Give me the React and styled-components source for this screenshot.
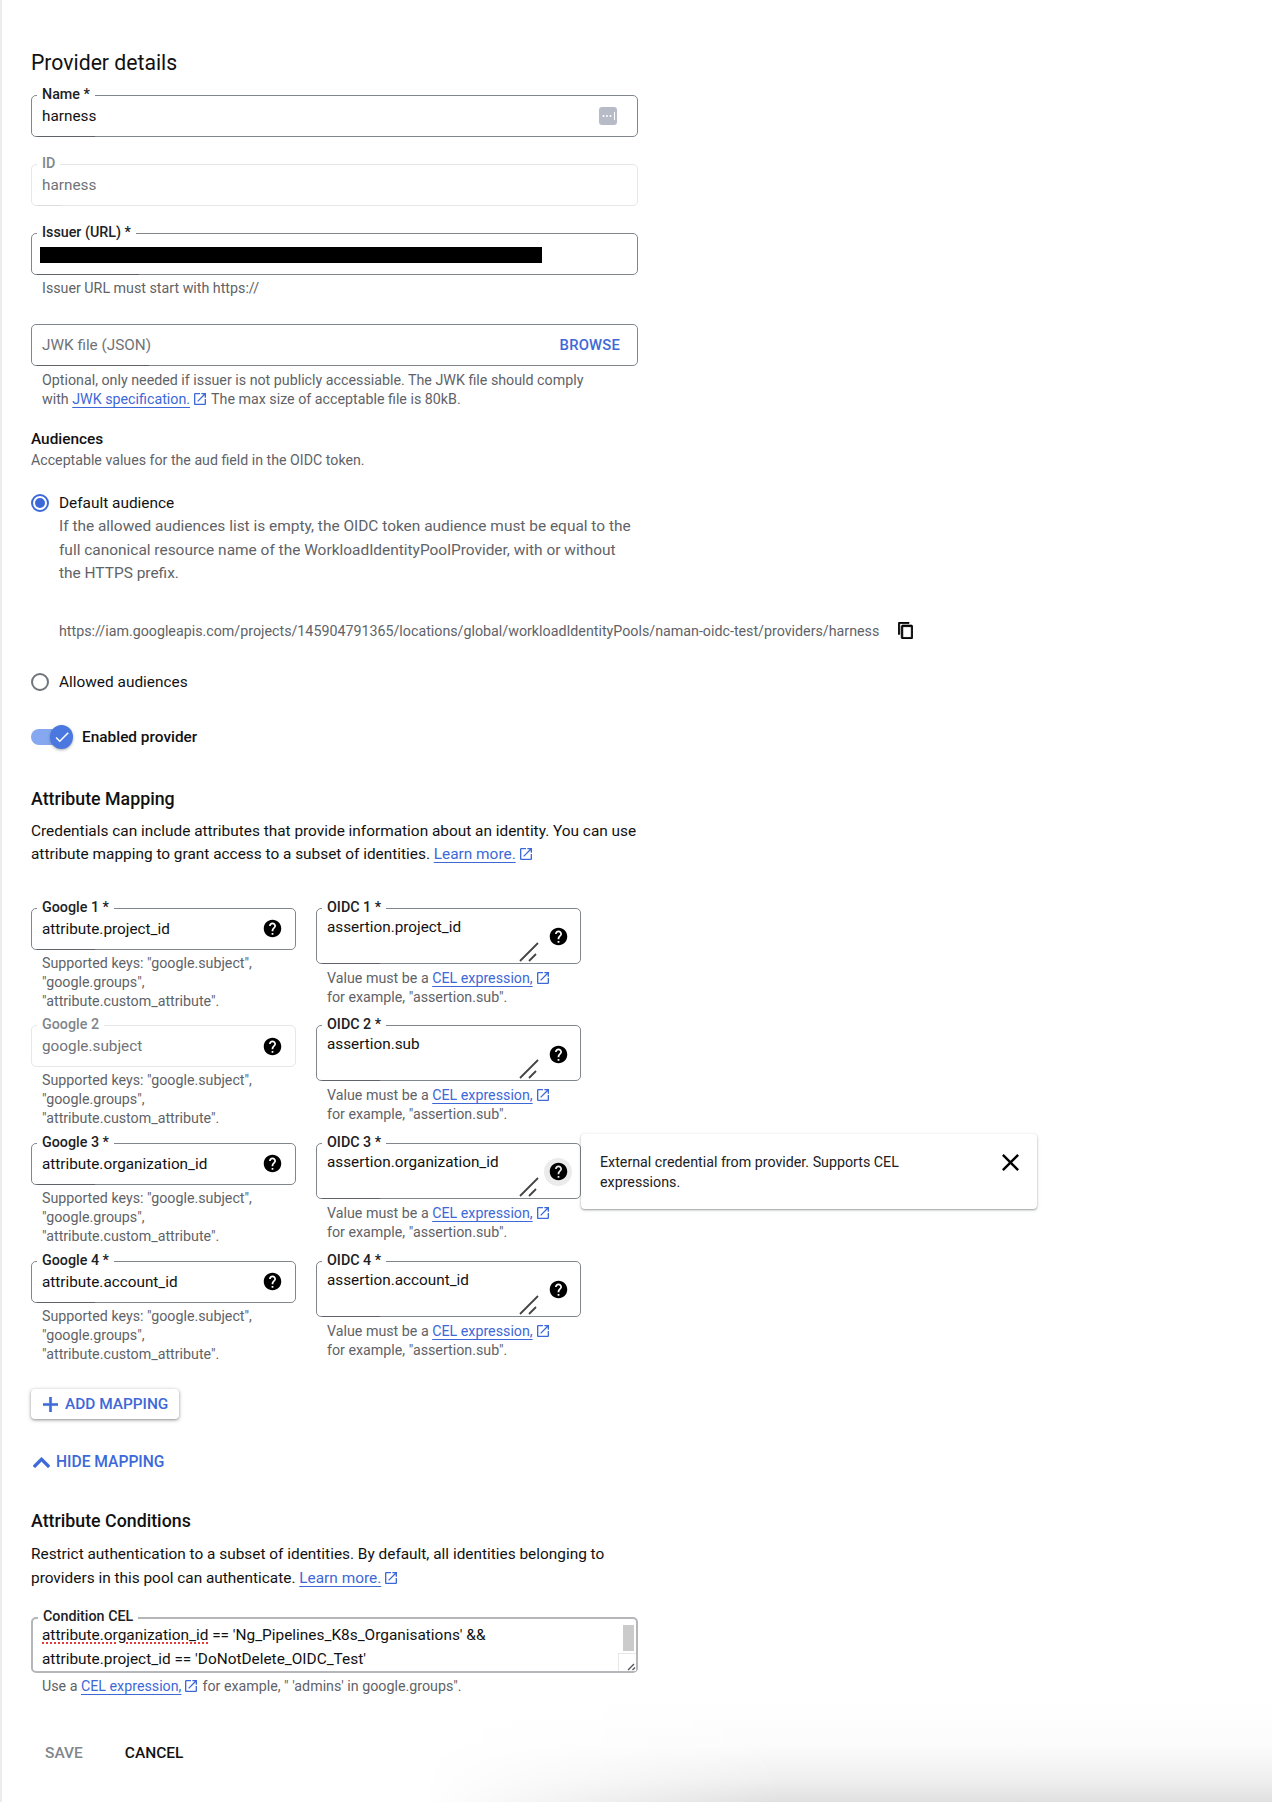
import React from "react";
import styled, { createGlobalStyle } from "styled-components";

const BLUE = "#3d68d8";
const HINT = "#5f6368";
const INK = "#202124";

const GlobalStyle = createGlobalStyle`
  html, body {
    margin: 0;
    padding: 0;
    background: #fff;
  }
  body {
    font-family: Roboto, "Liberation Sans", sans-serif;
    font-size: 14px;
    color: ${INK};
  }
`;

const Page = styled.div`
  position: relative;
  box-sizing: border-box;
  width: 100%;
  height: 1802px;
  overflow: hidden;
  padding: 51px 0 0 29px;
  border-left: 2px solid #ececec;
`;
const BottomShade = styled.div`
  position: absolute;
  left: 0;
  right: 0;
  bottom: 0;
  height: 100px;
  pointer-events: none;
  background: linear-gradient(to top, #e0e0e0 0, #efefef 22px, #fbfbfb 55px, #fff 100px);
  mask-image: linear-gradient(to right, transparent 420px, #000 780px);
`;
const Heading = styled.h2`
  margin: 0;
  font-size: 21.2px;
  line-height: 24px;
  font-weight: 400;
  color: #111;
`;
const SubHeading = styled.h3`
  margin: ${props => props.$top}px 0 0;
  font-size: 17.8px;
  line-height: 24px;
  font-weight: 500;
  color: #111;
`;
const Field = styled.div`
  position: relative;
  box-sizing: border-box;
  display: flex;
  align-items: ${props => (props.$area ? "flex-start" : "center")};
  justify-content: space-between;
  width: ${props => props.$width || 607}px;
  height: ${props => props.$height || 42}px;
  margin-top: ${props => props.$top || 0}px;
  padding: ${props => (props.$area ? "6px 10px 0" : "0 10px")};
  border: 1px solid ${props => (props.$off ? "#e6e7e9" : "#80868b")};
  border-radius: 5px;
  font-size: 15.3px;
  line-height: 24px;
  color: ${props => (props.$off || props.$muted ? "#6f7378" : "#111")};
  &::after {
    content: "";
    position: absolute;
    left: 5px;
    bottom: -1px;
    width: ${props => props.$notch || 0}px;
    height: 1px;
    background: ${props => (props.$off ? "#dcdde0" : "#5f6368")};
  }
`;
const FieldLabel = styled.label`
  position: absolute;
  top: ${props => props.$offset ?? -10}px;
  left: 5px;
  padding: 0 5px;
  background: #fff;
  font-size: 14.3px;
  line-height: 16px;
  font-weight: 500;
  white-space: nowrap;
  color: ${props => (props.$off ? "#80868b" : "#202124")};
`;
const Redacted = styled.div`
  width: 502px;
  height: 16px;
  margin: 2px 0 0 -2px;
  background: #000;
`;
const Browse = styled.span`
  margin-right: 7px;
  font-size: 14.8px;
  font-weight: 500;
  letter-spacing: 0.2px;
  color: ${BLUE};
`;
const Hint = styled.p`
  margin: ${props => props.$top || 0}px 0 0 ${props => props.$left ?? 11}px;
  width: ${props => props.$width || "auto"};
  font-size: 14.25px;
  line-height: ${props => props.$line || 19}px;
  color: ${HINT};
`;
const Copy = styled.p`
  margin: ${props => props.$top}px 0 0;
  width: ${props => props.$width || 610}px;
  font-size: ${props => props.$size || 15.4}px;
  line-height: ${props => props.$line || 24}px;
  color: ${props => props.$color || INK};
  font-weight: ${props => props.$weight || 400};
`;
const Link = styled.a`
  color: ${BLUE};
  text-decoration: underline;
  text-underline-offset: 3px;
  text-decoration-thickness: 1px;
`;
const Radio = styled.span`
  box-sizing: border-box;
  display: flex;
  align-items: center;
  justify-content: center;
  flex: none;
  width: 18px;
  height: 18px;
  border: 2px solid ${props => (props.$on ? BLUE : "#70757a")};
  border-radius: 50%;
  &::before {
    content: "";
    width: 10px;
    height: 10px;
    border-radius: 50%;
    background: ${props => (props.$on ? BLUE : "transparent")};
  }
`;
const RadioRow = styled.div`
  display: flex;
  align-items: center;
  gap: 10px;
  height: 24px;
  margin-top: ${props => props.$top}px;
  font-size: 15.4px;
  color: #111;
`;
const RadioBody = styled.p`
  margin: 0 0 0 28px;
  width: 578px;
  font-size: 15.44px;
  line-height: 23.5px;
  color: ${HINT};
`;
const UrlRow = styled.div`
  display: flex;
  align-items: center;
  gap: 19px;
  height: 24px;
  margin: 33px 0 0 28px;
  font-size: 14.26px;
  color: ${HINT};
  white-space: nowrap;
`;
const ToggleRow = styled.div`
  display: flex;
  align-items: center;
  gap: 9px;
  height: 24px;
  margin-top: 31px;
  font-size: 15.4px;
  font-weight: 500;
  color: #111;
`;
const Track = styled.span`
  position: relative;
  display: block;
  width: 29px;
  height: 16px;
  margin-right: 13px;
  border-radius: 8px;
  background: #86a8f0;
`;
const Thumb = styled.span`
  position: absolute;
  top: -4px;
  left: 19px;
  display: flex;
  align-items: center;
  justify-content: center;
  width: 23px;
  height: 24px;
  border-radius: 50%;
  background: #4a77e0;
  box-shadow: 0 1px 3px rgba(60, 64, 67, 0.45);
`;
const MappingGrid = styled.div`
  display: grid;
  grid-template-columns: 265px 265px;
  grid-auto-rows: 117.7px;
  column-gap: 20px;
  margin-top: 41px;
`;
const Cell = styled.div`
  min-width: 0;
`;
const HelpButton = styled.span`
  display: flex;
  align-items: center;
  justify-content: center;
  width: 28px;
  height: 28px;
  border-radius: 50%;
  background: ${props => (props.$active ? "#ebebeb" : "transparent")};
`;
const InlineHelp = styled(HelpButton)`
  margin-right: -1px;
`;
const AreaHelp = styled(HelpButton)`
  position: absolute;
  top: 14px;
  right: 8px;
`;
const ResizeMark = styled.svg`
  position: absolute;
  right: 41px;
  bottom: 1px;
`;
const Tooltip = styled.div`
  position: absolute;
  top: -10px;
  left: calc(100% + 1px);
  z-index: 2;
  box-sizing: border-box;
  display: flex;
  align-items: flex-start;
  justify-content: space-between;
  width: 456px;
  height: 75px;
  padding: 18px 18px 0 19px;
  background: #fff;
  border-radius: 4px;
  box-shadow: 0 1px 2px rgba(60, 64, 67, 0.45), 0 1px 4px rgba(60, 64, 67, 0.12);
  font-size: 14.25px;
  line-height: 20px;
  color: ${INK};
`;
const TooltipText = styled.span`
  width: 330px;
`;
const AddButton = styled.button`
  display: flex;
  align-items: center;
  gap: 7px;
  box-sizing: border-box;
  width: 148px;
  height: 30px;
  margin-top: 11px;
  padding: 0 0 0 12px;
  border: 0;
  border-radius: 4px;
  background: #fff;
  box-shadow: 0 1px 3px rgba(60, 64, 67, 0.5), 0 1px 5px rgba(60, 64, 67, 0.15);
  font: 500 15.4px Roboto, sans-serif;
  color: ${BLUE};
`;
const HideRow = styled.div`
  display: flex;
  align-items: center;
  gap: 6px;
  height: 20px;
  margin: 33px 0 0 2px;
  font-size: 15.6px;
  font-weight: 500;
  color: ${BLUE};
`;
const ConditionBox = styled.div`
  position: relative;
  box-sizing: border-box;
  width: 607px;
  height: 56px;
  margin-top: 27px;
  padding: 4px 9px 0;
  border: 2px solid #b4b6b9;
  border-radius: 5px;
  font-size: 15.4px;
  line-height: 24px;
  color: #111;
  white-space: nowrap;
`;
const Spelled = styled.span`
  text-decoration: underline dotted #e53935;
  text-decoration-thickness: 1.5px;
  text-underline-offset: 2px;
`;
const ScrollThumb = styled.span`
  position: absolute;
  top: 6px;
  right: 2px;
  width: 11px;
  height: 26px;
  background: #cbcbcb;
`;
const ResizeCorner = styled.span`
  position: absolute;
  right: 0;
  bottom: 0;
  display: flex;
  align-items: flex-end;
  justify-content: flex-end;
  width: 17px;
  height: 17px;
  border: solid #e8e8e8;
  border-width: 1px 0 0 1px;
  background: #fff;
`;
const Actions = styled.div`
  display: flex;
  align-items: center;
  gap: 42px;
  height: 20px;
  margin: 47px 0 0 14px;
  font-size: 15.5px;
  font-weight: 500;
`;
const ActionLabel = styled.span`
  color: ${props => (props.$off ? "#80868b" : "#111")};
`;
const OutIcon = styled.svg`
  vertical-align: -3px;
  margin: 0 ${props => props.$after ?? 3}px 0 2px;
`;

const OpenInNew = ({ color = BLUE, after }) => (
  <OutIcon $after={after} width="16" height="16" viewBox="0 0 24 24" fill={color}>
    <path d="M19 19H5V5h7V3H5c-1.11 0-2 .9-2 2v14c0 1.1.89 2 2 2h14c1.1 0 2-.9 2-2v-7h-2v7zM14 3v2h3.59l-9.83 9.83 1.41 1.41L19 6.41V10h2V3h-7z" />
  </OutIcon>
);
const HelpIcon = () => (
  <svg width="21" height="21" viewBox="0 0 24 24" fill="#000">
    <path d="M12 2C6.48 2 2 6.48 2 12s4.48 10 10 10 10-4.48 10-10S17.52 2 12 2zm1 17h-2v-2h2v2zm2.07-7.75l-.9.92C13.45 12.9 13 13.5 13 15h-2v-.5c0-1.1.45-2.1 1.17-2.83l1.24-1.26c.37-.36.59-.86.59-1.41 0-1.1-.9-2-2-2s-2 .9-2 2H8c0-2.21 1.79-4 4-4s4 1.79 4 4c0 .88-.36 1.68-.93 2.25z" />
  </svg>
);
const PasswordIcon = () => (
  <svg width="18" height="18" viewBox="0 0 18 18" style={{ marginRight: 10 }}>
    <rect width="18" height="18" rx="3" fill="#b6bbc6" />
    <circle cx="4.5" cy="9" r="1" fill="#fff" />
    <circle cx="8" cy="9" r="1" fill="#fff" />
    <circle cx="11.5" cy="9" r="1" fill="#fff" />
    <rect x="15" y="5" width="1" height="8" fill="#fff" />
  </svg>
);
const CopyIcon = () => (
  <svg width="15" height="17" viewBox="2 1 19 22" fill="#000">
    <path d="M16 1H4c-1.1 0-2 .9-2 2v14h2V3h12V1zm3 4H8c-1.1 0-2 .9-2 2v14c0 1.1.9 2 2 2h11c1.1 0 2-.9 2-2V7c0-1.1-.9-2-2-2zm0 16H8V7h11v14z" strokeWidth="1" stroke="#000" />
  </svg>
);
const CheckIcon = () => (
  <svg width="18" height="18" viewBox="0 0 24 24" fill="#fff">
    <path d="M9 16.17L4.83 12l-1.42 1.41L9 19 21 7l-1.41-1.41z" />
  </svg>
);
const CloseIcon = () => (
  <svg width="17" height="17" viewBox="5 5 14 14" fill="#000" style={{ marginTop: 2 }}>
    <path d="M19 6.41L17.59 5 12 10.59 6.41 5 5 6.41 10.59 12 5 17.59 6.41 19 12 13.41 17.59 19 19 17.59 13.41 12z" />
  </svg>
);
const PlusIcon = () => (
  <svg width="15" height="15" viewBox="5 5 14 14" fill={BLUE} stroke={BLUE} strokeWidth="0.5">
    <path d="M19 13h-6v6h-2v-6H5v-2h6V5h2v6h6v2z" />
  </svg>
);
const ChevronUp = () => (
  <svg width="17" height="11" viewBox="6 8 12 7.41" fill={BLUE} stroke={BLUE} strokeWidth="0.5">
    <path d="M12 8l-6 6 1.41 1.41L12 10.83l4.59 4.58L18 14z" />
  </svg>
);

const googleRows = [
  { label: "Google 1 *", value: "attribute.project_id", notch: 58 },
  { label: "Google 2", value: "google.subject", off: true },
  { label: "Google 3 *", value: "attribute.organization_id", notch: 58 },
  { label: "Google 4 *", value: "attribute.account_id", notch: 58 },
];
const oidcRows = [
  { label: "OIDC 1 *", value: "assertion.project_id" },
  { label: "OIDC 2 *", value: "assertion.sub" },
  { label: "OIDC 3 *", value: "assertion.organization_id", open: true },
  { label: "OIDC 4 *", value: "assertion.account_id" },
];

export default function App() {
  return (
    <Page>
      <GlobalStyle />
      <Heading>Provider details</Heading>

      <Field $top={20} $notch={58}>
        <FieldLabel>Name *</FieldLabel>
        harness
        <PasswordIcon />
      </Field>
      <Field $top={27} $off $notch={24}>
        <FieldLabel $off>ID</FieldLabel>
        harness
      </Field>
      <Field $top={27} $notch={102}>
        <FieldLabel>Issuer (URL) *</FieldLabel>
        <Redacted />
      </Field>
      <Hint $top={4}>Issuer URL must start with https://</Hint>
      <Field $top={26} $muted $notch={112}>
        JWK file (JSON)
        <Browse>BROWSE</Browse>
      </Field>
      <Hint $top={5} $width="560px">
        Optional, only needed if issuer is not publicly accessiable. The JWK file should comply
        with <Link>JWK specification.</Link>
        <OpenInNew />
        The max size of acceptable file is 80kB.
      </Hint>

      <Copy $top={20} $line={20} $weight={500} $color="#111">Audiences</Copy>
      <Copy $top={1} $line={20} $size={14.2} $color={HINT}>Acceptable values for the aud field in the OIDC token.</Copy>

      <RadioRow $top={21}>
        <Radio $on />
        Default audience
      </RadioRow>
      <RadioBody>
        If the allowed audiences list is empty, the OIDC token audience must be equal to the
        full canonical resource name of the WorkloadIdentityPoolProvider, with or without
        the HTTPS prefix.
      </RadioBody>
      <UrlRow>
        https://iam.googleapis.com/projects/145904791365/locations/global/workloadIdentityPools/naman-oidc-test/providers/harness
        <CopyIcon />
      </UrlRow>
      <RadioRow $top={27}>
        <Radio />
        Allowed audiences
      </RadioRow>

      <ToggleRow>
        <Track>
          <Thumb>
            <CheckIcon />
          </Thumb>
        </Track>
        Enabled provider
      </ToggleRow>

      <SubHeading $top={38}>Attribute Mapping</SubHeading>
      <Copy $top={9} $line={23.5} $color="#111">
        Credentials can include attributes that provide information about an identity. You can use
        attribute mapping to grant access to a subset of identities. <Link>Learn more.</Link>
        <OpenInNew />
      </Copy>

      <MappingGrid>
        {googleRows.map((row, i) => (
          <React.Fragment key={row.label}>
            <Cell>
              <Field $width={265} $off={row.off} $notch={row.notch}>
                <FieldLabel $off={row.off}>{row.label}</FieldLabel>
                {row.value}
                <InlineHelp>
                  <HelpIcon />
                </InlineHelp>
              </Field>
              <Hint $top={4} $width="230px">
                Supported keys: "google.subject", "google.groups", "attribute.custom_attribute".
              </Hint>
            </Cell>
            <Cell>
              <Field $width={265} $height={56} $area $notch={58}>
                <FieldLabel>{oidcRows[i].label}</FieldLabel>
                {oidcRows[i].value}
                <AreaHelp $active={oidcRows[i].open}>
                  <HelpIcon />
                </AreaHelp>
                <ResizeMark width="20" height="20" viewBox="0 0 20 20" stroke="#444" strokeWidth="1.8">
                  <path d="M1 19L19 1M10 19L17 12" />
                </ResizeMark>
                {oidcRows[i].open && (
                  <Tooltip>
                    <TooltipText>External credential from provider. Supports CEL expressions.</TooltipText>
                    <CloseIcon />
                  </Tooltip>
                )}
              </Field>
              <Hint $top={5} $width="240px">
                Value must be a <Link>CEL expression,</Link>
                <OpenInNew />
                for example, "assertion.sub".
              </Hint>
            </Cell>
          </React.Fragment>
        ))}
      </MappingGrid>

      <AddButton>
        <PlusIcon />
        ADD MAPPING
      </AddButton>
      <HideRow>
        <ChevronUp />
        HIDE MAPPING
      </HideRow>

      <SubHeading $top={37}>Attribute Conditions</SubHeading>
      <Copy $top={9} $color="#111">
        Restrict authentication to a subset of identities. By default, all identities belonging to
        providers in this pool can authenticate. <Link>Learn more.</Link>
        <OpenInNew />
      </Copy>

      <ConditionBox>
        <FieldLabel $offset={-11}>Condition CEL</FieldLabel>
        <Spelled>attribute.organization_id</Spelled> == 'Ng_Pipelines_K8s_Organisations' &amp;&amp;
        <br />
        attribute.project_id == 'DoNotDelete_OIDC_Test'
        <ScrollThumb />
        <ResizeCorner>
          <svg width="9" height="9" viewBox="0 0 9 9" stroke="#555" strokeWidth="1.4">
            <path d="M1 8L7 2M5.5 8L8 5.5" />
          </svg>
        </ResizeCorner>
      </ConditionBox>
      <Hint $top={4}>
        Use a <Link>CEL expression,</Link>
        <OpenInNew />
        for example, " 'admins' in google.groups".
      </Hint>

      <Actions>
        <ActionLabel $off>SAVE</ActionLabel>
        <ActionLabel>CANCEL</ActionLabel>
      </Actions>
      <BottomShade />
    </Page>
  );
}
